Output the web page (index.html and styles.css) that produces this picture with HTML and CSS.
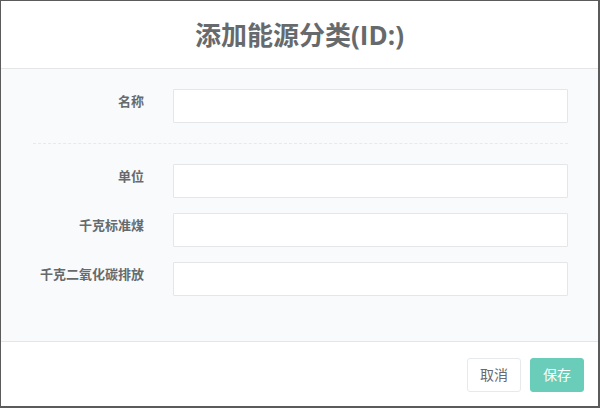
FILE: index.html
```html
<!DOCTYPE html>
<html lang="zh">

<head>
  <meta charset="UTF-8" />
  <meta name="viewport" content="width=device-width, initial-scale=1.0" />
  <title>添加能源分类</title>
  <link rel="stylesheet" href="styles.css">
</head>

<body>
  <div class="modal">
    <div class="modal-header">
      <h4 class="modal-title">添加能源分类(ID:)</h4>
    </div>
    <form class="modal-body">
      <div class="form-group">
        <label class="control-label">名称</label>
        <input class="form-control" type="text" />
      </div>
      <div class="hr-line-dashed"></div>
      <div class="form-group">
        <label class="control-label">单位</label>
        <input class="form-control" type="text" />
      </div>
      <div class="form-group">
        <label class="control-label">千克标准煤</label>
        <input class="form-control" type="text" />
      </div>
      <div class="form-group">
        <label class="control-label">千克二氧化碳排放</label>
        <input class="form-control" type="text" />
      </div>
    </form>
    <div class="modal-footer">
      <button class="btn btn-white">取消</button>
      <button class="btn btn-primary" disabled>保存</button>
    </div>
  </div>
</body>

</html>
```

FILE: styles.css
```css
* {
  box-sizing: border-box;
}

body {
  margin: 0;
  padding: 1px 2px 2px 1px;
  background-color: #5b5b5b;
  font-family: "Open Sans", "Noto Sans CJK SC", sans-serif;
  color: #676a6c;
  height: 408px;
}

.modal {
  width: 597px;
  height: 405px;
  background-color: #ffffff;
  display: flex;
  flex-direction: column;
}

.modal-header {
  padding: 20px 15px 18px;
  border-bottom: 1px solid #e5e5e5;
  text-align: center;
}

.modal-title {
  margin: 0;
  font-size: 26px;
  line-height: 29px;
  font-weight: 700;
  color: #676a6c;
}

.modal-body {
  margin: 0;
  padding: 20px 30px 30px 32px;
  background-color: #f8fafb;
  flex: 1 0 auto;
}

.form-group {
  display: flex;
  margin-bottom: 15px;
}

.form-group:last-child {
  margin-bottom: 0;
}

.control-label {
  width: 111px;
  margin-right: 29px;
  padding-top: 3px;
  text-align: right;
  font-size: 13px;
  line-height: 18px;
  font-weight: 700;
}

.form-control {
  flex: 1;
  height: 34px;
  margin: 0;
  padding: 6px 12px;
  background-color: #ffffff;
  border: 1px solid #e5e6e7;
  border-radius: 1px;
  font-size: 14px;
}

.hr-line-dashed {
  height: 1px;
  margin: 20px 0;
  border-top: 1px dashed #e7eaec;
}

.modal-footer {
  display: flex;
  justify-content: flex-end;
  gap: 9px;
  padding: 16px 14px 14px 15px;
  border-top: 1px solid #e5e5e5;
}

.btn {
  height: 34px;
  padding: 6px 12px;
  font-family: "Open Sans", "Noto Sans CJK SC", sans-serif;
  font-size: 14px;
  line-height: 20px;
  border-radius: 3px;
}

.btn-white {
  background-color: #ffffff;
  border: 1px solid #e7eaec;
  color: #676a6c;
}

.btn-primary {
  background-color: #1ab394;
  border: 1px solid #1ab394;
  color: #ffffff;
  opacity: 0.65;
}
```
